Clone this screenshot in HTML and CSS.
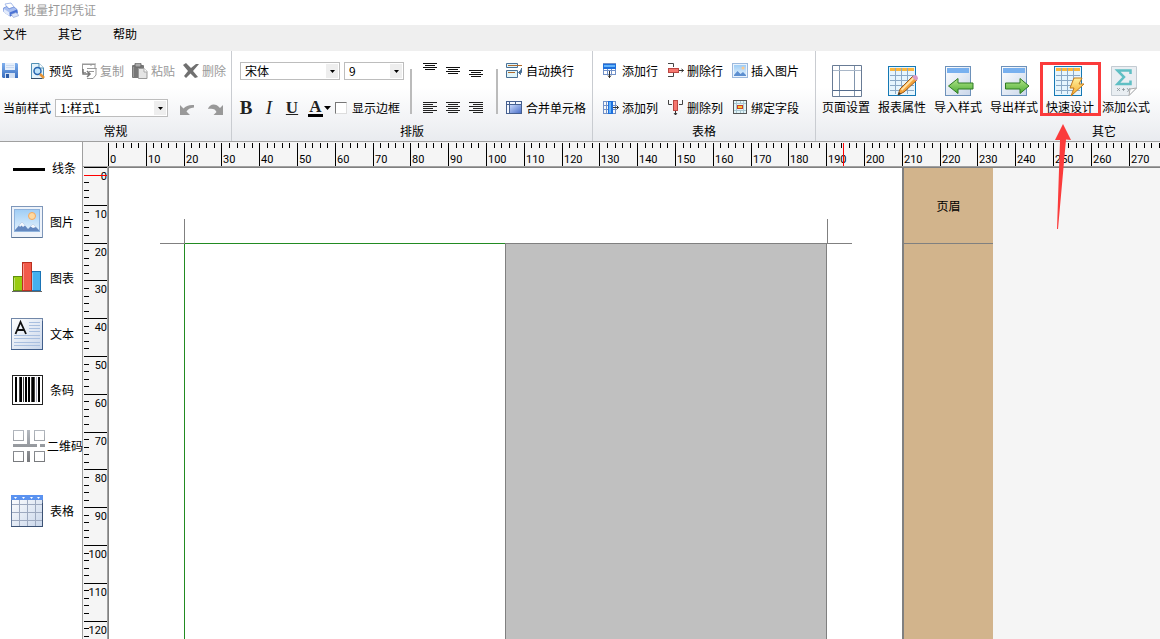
FILE: index.html
```html
<!DOCTYPE html>
<html lang="zh-CN">
<head>
<meta charset="utf-8">
<title>批量打印凭证</title>
<link rel="stylesheet" href="styles.css">
</head>
<body>
<svg class="defs" aria-hidden="true">
  <defs>
    <linearGradient id="sky" x1="0" y1="0" x2="0" y2="1"><stop offset="0" stop-color="#9fcdf5"/><stop offset="1" stop-color="#e4f2fd"/></linearGradient>
    <linearGradient id="paper" x1="0" y1="0" x2="1" y2="1"><stop offset="0" stop-color="#fff"/><stop offset="1" stop-color="#c9d6ea"/></linearGradient>
    <linearGradient id="blue" x1="0" y1="0" x2="1" y2="1"><stop offset="0" stop-color="#c7d8fb"/><stop offset="1" stop-color="#4a6fc8"/></linearGradient>
    <linearGradient id="disk" x1="0" y1="0" x2="0" y2="1"><stop offset="0" stop-color="#7fb0ee"/><stop offset="1" stop-color="#3b6fc0"/></linearGradient>
    <linearGradient id="green" x1="0" y1="0" x2="0" y2="1"><stop offset="0" stop-color="#b4e68a"/><stop offset="1" stop-color="#4bab35"/></linearGradient>
    <linearGradient id="bolt" x1="0" y1="0" x2="0" y2="1"><stop offset="0" stop-color="#fff2a0"/><stop offset="1" stop-color="#f5a623"/></linearGradient>
    <linearGradient id="steel" x1="0" y1="0" x2="0" y2="32" gradientUnits="userSpaceOnUse"><stop offset="0" stop-color="#b4b9c0"/><stop offset="1" stop-color="#77797c"/></linearGradient>
    <symbol id="table-blue" viewBox="0 0 28 30">
      <rect x=".5" y=".5" width="27" height="29" fill="#e6f5fd" stroke="#1478b4"/>
      <rect x="2" y="2" width="24" height="3" fill="#fbb63c"/>
      <path d="M2 9.500H26M2 14.500H26M2 19.500H26M2 24.500H26M7.500 2V28M13.500 2V28M19.500 2V28" stroke="#8aa9c6" fill="none"/>
    </symbol>
    <symbol id="picture" viewBox="0 0 32 32">
      <rect x=".5" y=".5" width="31" height="31" fill="#eef3fa" stroke="#7e97ba"/>
      <rect x="3.500" y="3.500" width="25" height="22" fill="url(#sky)" stroke="#8fb3dc"/>
      <circle cx="21" cy="10" r="3.500" fill="#ffd9a0" stroke="#f4a95e"/>
      <path d="M4 24L11 16L17 23L22 18L28 24V25H4Z" fill="#6488bf"/>
      <path d="M8 19.500L11 16L14 19.500L12 21L10.500 19.500L9 21ZM19.500 20.500L22 18L25 21L22 22Z" fill="#f4f8fd"/>
      <path d="M1 31.500H31" stroke="#5c7596"/>
    </symbol>
  </defs>
</svg>

<header class="titlebar">
  <svg class="app-icon" viewBox="0 0 16 16"><path d="M2 2L8 1L11 5L5 7Z" fill="#fff" stroke="#a9bdea"/><path d="M.5 6L4 4.500L6 7L11 5L14 7.500L14.500 11L7 14L1 10Z" fill="#a9bff0" stroke="#7f9ce0"/><path d="M1 7L6.500 10.500V14L1 10.500Z" fill="#e3ebfb"/><path d="M6.500 10.500L14 7.500L14.500 11.500L7 14.500Z" fill="#4a72d4"/><path d="M8 12.500L13 10.500L16 13.500L10.500 15.500Z" fill="#dbe4f8" stroke="#8aa0d4" stroke-width=".6"/></svg>
  <span>批量打印凭证</span>
</header>

<nav class="menubar">
  <button class="menu">文件</button>
  <button class="menu">其它</button>
  <button class="menu">帮助</button>
</nav>

<section class="ribbon">
  <div class="group general">
    <div class="row tools">
      <button class="tool save" aria-label="保存"><svg class="icon" viewBox="0 0 16 16"><path d="M0 0H15L16 1V15H1L0 14Z" fill="url(#disk)"/><rect x="3" y="0" width="10" height="7" fill="#e6effb"/><path d="M4 2.500H12M4 4.500H12" stroke="#c9d9f0"/><rect x="3" y="10" width="10" height="5" fill="#d3e0f3"/><rect x="4" y="11" width="3" height="4" fill="#2c5ca8"/></svg></button>
      <button class="tool"><svg class="icon" viewBox="0 0 16 16"><path d="M1.500 .5H9L13.500 5V15.500H1.500Z" fill="#e4f3fb" stroke="#5291b5"/><path d="M9 .5V5H13.500" fill="#fff" stroke="#5291b5"/><path d="M1 15.500H12" stroke="#334d68"/><circle cx="7.500" cy="8" r="3.500" fill="#bde3fb" stroke="#2765b0" stroke-width="1.500"/><path d="M10 11L14 15" stroke="#e79436" stroke-width="2.500"/></svg>预览</button>
      <button class="tool off" disabled><svg class="icon" viewBox="0 0 16 16" fill="none" stroke="#999"><path d="M10 3V1.500H1M1.500 1V9.500H5M14 5V1.500H9M1 1H15" /><path d="M6 5.500H15.500M15 5V12L12 15.500H6M8 8.500H13"/><path d="M2 6V11H8M6 8L9 11L6 14" stroke="#777" stroke-width="1.500"/></svg>复制</button>
      <button class="tool off" disabled><svg class="icon" viewBox="0 0 16 16"><rect x="0" y="2" width="12" height="13" rx="1" fill="#777"/><rect x="3" y="0" width="6" height="4" rx="1" fill="#aaa" stroke="#666"/><path d="M1.500 4V14" stroke="#999"/><path d="M6.500 5.500H12L15 8.500V15.500H6.500Z" fill="#e4e4e4" stroke="#999"/><path d="M12 5V9H15" fill="#fff" stroke="#aaa"/></svg>粘贴</button>
      <button class="tool off" disabled><svg class="icon" viewBox="0 0 16 16"><path d="M0 2L3 0L8 5L13 1L16 1L10 8L15 14L12 15L7.500 10.500L3 15L1 13L5 8Z" fill="#707070"/></svg>删除</button>
    </div>
    <div class="row style-row">
      <label for="style">当前样式</label>
      <select id="style" class="combo style-select"><option>1:样式1</option></select>
      <button class="tool undo" aria-label="撤销"><svg class="icon" viewBox="0 0 16 16"><path d="M0 5V15H10L6.500 11.500C8 9 10 8 14 7.500V5C9 4.500 6 6 3.500 8.500Z" fill="#999"/></svg></button>
      <button class="tool" aria-label="重做"><svg class="icon" viewBox="0 0 16 16"><path d="M15 5V15H5.500L8.500 12C7.500 9 4.500 8 0 9C1.500 4 7.500 2.500 12 8Z" fill="#999"/></svg></button>
    </div>
    <h2 class="group-title">常规</h2>
  </div>

  <div class="group layout">
    <div class="layout-body">
      <div class="font-panel">
        <div class="row fonts">
          <select class="combo font-select" aria-label="字体"><option>宋体</option></select>
          <select class="combo size-select" aria-label="字号"><option>9</option></select>
        </div>
        <div class="row formats">
          <button class="format bold">B</button>
          <button class="format italic">I</button>
          <button class="format under">U</button>
          <button class="format color"><span class="swatch">A</span><svg class="caret" viewBox="0 0 7 4"><path d="M0 0H7L3.500 4Z"/></svg></button>
          <label class="check"><input type="checkbox" class="box">显示边框</label>
        </div>
      </div>
      <div class="aligns">
        <button class="tool" aria-label="顶端对齐"><svg class="icon" viewBox="0 0 16 16" stroke="#111"><path d="M1 .5H15M3 2.500H13M1 4.500H15M3 6.500H13"/></svg></button>
        <button class="tool" aria-label="垂直居中"><svg class="icon" viewBox="0 0 16 16" stroke="#111"><path d="M1 4.500H15M3 6.500H13M1 8.500H15M3 10.500H13"/></svg></button>
        <button class="tool" aria-label="底端对齐"><svg class="icon" viewBox="0 0 16 16" stroke="#111"><path d="M1 7.500H15M3 9.500H13M1 11.500H15M3 13.500H13"/></svg></button>
        <button class="tool" aria-label="左对齐"><svg class="icon" viewBox="0 0 16 16" stroke="#222"><path d="M1 2.500H15M1 4.500H11M1 6.500H15M1 8.500H11M1 10.500H15M1 12.500H11"/></svg></button>
        <button class="tool" aria-label="居中"><svg class="icon" viewBox="0 0 16 16" stroke="#222"><path d="M1 2.500H15M3 4.500H13M1 6.500H15M3 8.500H13M1 10.500H15M3 12.500H13"/></svg></button>
        <button class="tool" aria-label="右对齐"><svg class="icon" viewBox="0 0 16 16" stroke="#222"><path d="M1 2.500H15M5 4.500H15M1 6.500H15M5 8.500H15M1 10.500H15M5 12.500H15"/></svg></button>
      </div>
      <div class="cells">
        <button class="tool"><svg class="icon" viewBox="0 0 16 16"><path d="M.5 .5H11.500V4.500H.5ZM.5 7.500H11.500V14.500H.5Z" fill="#e0f5fa" stroke="#4a7196"/><path d="M2 2.500H16M2 9.500H9" stroke="#b06a2c"/><path d="M15.500 5V9.500H13M14.500 7.500V11.500L12.500 9.500Z" fill="#4a7196" stroke="#4a7196"/></svg>自动换行</button>
        <button class="tool"><svg class="icon" viewBox="0 0 16 16"><rect x=".5" y="1.500" width="15" height="12" fill="#f4f8ff" stroke="#46608f"/><rect x="4" y="5" width="11" height="8" fill="url(#blue)"/><path d="M1 4.500H15M3.500 2V13M9.500 2V4" stroke="#46608f"/></svg>合并单元格</button>
      </div>
    </div>
    <h2 class="group-title">排版</h2>
  </div>

  <div class="group table-group">
    <div class="table-tools">
      <button class="tool"><svg class="icon" viewBox="0 0 16 16"><path d="M.5 0V12M4.500 0V12M8.500 0V12M12.500 0V12M0 .5H13M0 7.500H13M0 11.500H13" stroke="#7191c8" fill="none"/><rect x="0" y="1" width="13" height="5" fill="#1e6fdc"/><rect x="1" y="2" width="11" height="2" fill="#64b4fa"/><path d="M6.500 8V15M5 12.500L6.500 14.500L8 12.500" stroke="#333" fill="none"/></svg>添加行</button>
      <button class="tool"><svg class="icon" viewBox="0 0 16 16"><path d="M0 .5H5.500V4M0 13.500H5.500V10" stroke="#444" fill="none"/><rect x=".5" y="5.500" width="10" height="4" fill="#f6776f" stroke="#ba4843"/><path d="M11 7.500H15.500M13.500 6L15.500 7.500L13.500 9" stroke="#333" fill="none"/></svg>删除行</button>
      <button class="tool"><svg class="icon" viewBox="0 0 16 16"><rect x=".5" y=".5" width="15" height="14" fill="#eaf3fd" stroke="#9cb8dc"/><rect x="2" y="2" width="12" height="11" fill="url(#sky)"/><circle cx="11" cy="5" r="1.500" fill="#ffc98c"/><path d="M2 12L5.500 8L8.500 11L11 9L14 12V13H2Z" fill="#5d8fd0"/></svg>插入图片</button>
      <button class="tool"><svg class="icon" viewBox="0 0 16 16"><path d="M.5 1V14M3.500 1V14M9.500 1V14M12.500 1V14M0 1.500H13M0 5.500H13M0 9.500H13M0 13.500H13" stroke="#7191c8" fill="none"/><rect x="5" y="1" width="5" height="13" fill="#1e6fdc"/><rect x="6" y="2" width="2" height="11" fill="#64b4fa"/><path d="M10 7.500H15.500M13.500 5.500L15.500 7.500L13.500 9.500" stroke="#333" fill="none"/></svg>添加列</button>
      <button class="tool"><svg class="icon" viewBox="0 0 16 16"><path d="M.5 0V4.500H4M14.500 0V4.500H11" stroke="#444" fill="none"/><rect x="5.500" y=".5" width="4" height="10" fill="#f6776f" stroke="#ba4843"/><path d="M7.500 11V15M6 13L7.500 15L9 13" stroke="#333" fill="none"/></svg>删除列</button>
      <button class="tool"><svg class="icon" viewBox="0 0 16 16"><rect x="1.500" y=".5" width="13" height="13" fill="#e1f4f8" stroke="#555"/><path d="M2 3.500H14M2 10.500H14M4.500 1V13M8.500 1V4M8.500 10V13M11.500 1V13" stroke="#a9c6d0"/><rect x="5.500" y="5.500" width="5" height="3" fill="#ffc32b" stroke="#c5402c"/></svg>绑定字段</button>
    </div>
    <h2 class="group-title">表格</h2>
  </div>

  <div class="group other">
    <div class="big-tools">
      <button class="big"><svg class="big-icon" viewBox="0 0 32 34"><path d="M2.500 1.500H31.500V32.500H2.500Z" fill="#fff" stroke="#687b95"/><path d="M9.500 2V32M24.500 2V32" stroke="#8195ad"/><path d="M3 6.500H31" stroke="#a9b7c8"/><path d="M3 26.500H31" stroke="#536b8c"/></svg>页面设置</button>
      <button class="big"><svg class="big-icon" viewBox="0 0 32 34"><use href="#table-blue" x="2" y="2" width="28" height="30"/><path d="M12 31L14 25L27 12L31 16L18 28Z" fill="#f5a33b" stroke="#9d5b18"/><path d="M15.500 26L27.500 14" stroke="#ffe1a2" stroke-width="2"/><path d="M26 13L28.500 11Q32 11 32 15L30 17Z" fill="#d79bc8"/><path d="M12 31L13 28L15 30Z" fill="#333"/></svg>报表属性</button>
      <button class="big"><svg class="big-icon" viewBox="0 0 32 34"><rect x="3.500" y="2.500" width="25" height="29" fill="url(#paper)" stroke="#6d91ba"/><rect x="5" y="4" width="22" height="5" fill="#78b0ef"/><path d="M6.500 22L16 14.500V19H31V25H16V29.500Z" fill="url(#green)" stroke="#2f7a25"/></svg>导入样式</button>
      <button class="big"><svg class="big-icon" viewBox="0 0 32 34"><rect x="3.500" y="2.500" width="25" height="29" fill="url(#paper)" stroke="#6d91ba"/><rect x="5" y="4" width="22" height="5" fill="#78b0ef"/><path d="M31 22L22 14.500V19H7.500V25H22V29.500Z" fill="url(#green)" stroke="#2f7a25"/></svg>导出样式</button>
      <div class="marked">
        <button class="big"><svg class="big-icon" viewBox="0 0 32 34"><use href="#table-blue" x="0" y="2" width="28" height="30"/><path d="M20 14H28L25 20H30L17 32L20 24H16Z" fill="url(#bolt)" stroke="#c47a1a"/></svg>快速设计</button>
        <span class="mark-box"></span>
        <svg class="mark-arrow" viewBox="0 0 18 106"><path d="M8 0L16 16L11 15.500L3 105H2L5 16H0Z" fill="#fb3b3b"/></svg>
      </div>
      <button class="big"><svg class="big-icon" viewBox="0 0 32 34"><path d="M1.500 2.500H26.500V24L19 31.500H1.500Z" fill="#e9eef2" stroke="#c3cbd2"/><path d="M26.500 24L19 31.500L20 25Z" fill="#fff" stroke="#aaa"/><path d="M20.500 10V6.500H7.500L14 13L7.500 20H20.500V16.500" fill="none" stroke="#5fbfc4" stroke-width="2.500"/><path d="M7 24L10 27M10 24L7 27M12 25.500H15M13.500 24V27M17 24L18.500 26M20 24L17.500 28" stroke="#8a9499" stroke-width=".8"/></svg>添加公式</button>
    </div>
    <h2 class="group-title">其它</h2>
  </div>
</section>

<main class="workspace">
  <aside class="toolbox">
    <button class="item line-item"><svg class="item-icon" viewBox="0 0 32 32"><path d="M2 17.500H34" stroke="#000" stroke-width="3"/></svg>线条</button>
    <button class="item"><svg class="item-icon" viewBox="0 0 32 32"><use href="#picture"/></svg>图片</button>
    <button class="item"><svg class="item-icon" viewBox="0 0 32 32"><rect x="2.500" y="14.500" width="9" height="14" fill="#99cc10" stroke="#5f8f10"/><rect x="20.500" y="9.500" width="9" height="19" fill="#45b0ee" stroke="#1a73b5"/><rect x="11.500" y=".5" width="9" height="28" fill="#f25a4a" stroke="#b92f20"/><path d="M12.500 2V28M3.500 16V28M21.500 11V28" stroke="#fff" stroke-opacity=".4"/><path d="M1 29.500H31" stroke="#666"/></svg>图表</button>
    <button class="item"><svg class="item-icon" viewBox="0 0 32 32"><rect x=".5" y=".5" width="31" height="31" fill="url(#paper)" stroke="#7187a8"/><path d="M0 31.500H32M31.500 3V32" stroke="#415f8c"/><path d="M18 4.500H29M18 7.500H29M18 10.500H29M18 13.500H29M3 17.500H29M3 20.500H29M3 24.500H29M3 27.500H29" stroke="#a9bfdf"/><path d="M4.500 16L9.500 4L15 16M6.500 12H13" fill="none" stroke="#111" stroke-width="1.800"/></svg>文本</button>
    <button class="item"><svg class="item-icon" viewBox="0 0 32 32"><rect x="1.500" y="1.500" width="30" height="29" fill="#fff" stroke="#222"/><path d="M5 3V28M10 3V28M15 3V28M18 3V28M22 3V28M28 3V28" stroke="#000" stroke-width="2"/><path d="M8.500 3V28M12.500 3V28M20.500 3V28M23.500 3V28" stroke="#444"/><path d="M25.500 3V28" stroke="#aab"/></svg>条码</button>
    <button class="item wide-item"><svg class="item-icon" viewBox="0 0 32 32"><g fill="none" stroke="url(#steel)"><rect x="2.500" y=".5" width="10" height="10"/><rect x="23.500" y=".5" width="10" height="10"/><rect x="2.500" y="21.500" width="10" height="10"/><rect x="23.500" y="21.500" width="10" height="10"/></g><path d="M16 0H19V14H26V17H2V14H16ZM29 14H34V17H29ZM16 21H19V32H16Z" fill="url(#steel)"/></svg>二维码</button>
    <button class="item last-item"><svg class="item-icon" viewBox="0 0 32 32"><rect x=".5" y=".5" width="31" height="31" fill="url(#paper)" stroke="#62789a"/><rect x="0" y="0" width="32" height="5" fill="#5a92f0"/><path d="M3 2H6L4.500 4ZM11 2H14L12.500 4ZM19 2H22L20.500 4ZM26 2H29L27.500 4Z" fill="#fff"/><path d="M1 9.500H31M1 17.500H31M1 25.500H31M8.500 5V31M16.500 5V31M24.500 5V31" stroke="#9da9bf"/><path d="M0 31.500H32M31.500 8V32" stroke="#3c5274"/></svg>表格</button>
  </aside>
  <svg class="ruler ruler-h" id="ruler-h"></svg>
  <svg class="ruler ruler-v" id="ruler-v"></svg>
  <div class="canvas">
    <div class="paper">
      <div class="cell first-cell"></div>
      <div class="cell filled-cell"></div>
    </div>
    <div class="bands">
      <div class="band">页眉</div>
    </div>
  </div>
</main>
<script src="rulers.js"></script>
</body>
</html>
```

FILE: styles.css
```css
*, *::before, *::after { box-sizing: border-box; }

body {
  margin: 0;
  height: 100vh;
  display: flex;
  flex-direction: column;
  overflow: hidden;
  background: #fff;
  color: #000;
  font: 12px/16px "Noto Sans CJK SC", sans-serif;
}

button, select, input { font: inherit; color: inherit; margin: 0; }
button { background: none; border: 0; padding: 0; white-space: nowrap; }

.defs { position: absolute; width: 0; height: 0; }

.titlebar {
  flex: none;
  height: 25px;
  padding: 0 3px 6px;
  display: flex;
  align-items: center;
  gap: 5px;
  color: #999;
}
.app-icon { width: 16px; height: 16px; }

.menubar {
  flex: none;
  height: 26px;
  padding: 0 3px 8px;
  display: flex;
  align-items: center;
  gap: 31px;
  background: #efefef;
}

.ribbon {
  flex: none;
  display: flex;
  height: 91px;
  background: linear-gradient(#fff 40%, #e9ebef);
  border-bottom: 1px solid #a0a0a0;
}
.group {
  flex: none;
  display: flex;
  flex-direction: column;
  border-right: 1px solid #c9ccd1;
}
.general { width: 232px; }
.layout { width: 361px; }
.table-group { width: 223px; }
.other { flex: 1; min-width: 0; border-right: 0; }

.group-title {
  margin: 0;
  font: inherit;
  line-height: 12px;
  text-align: center;
}
.other .group-title { text-align: left; padding-left: 276px; }

.row { display: flex; align-items: center; height: 40px; }
.row + .row { height: 34px; }

.tool { display: flex; align-items: center; gap: 3px; }
.off { color: #999; }
.icon { width: 16px; height: 16px; flex: none; }

.tools { padding-left: 2px; gap: 8px; }
.save { width: 20px; }

.style-row { padding-left: 3px; gap: 4px; }
.style-row .undo { margin: 0 8px; }

.combo {
  appearance: none;
  height: 18px;
  padding: 0 16px 0 4px;
  border: 1px solid #bdbdbd;
  border-radius: 0;
  line-height: 16px;
  background:
    url("data:image/svg+xml,%3Csvg xmlns='http://www.w3.org/2000/svg' width='5' height='3'%3E%3Cpath d='M0 0H5L2.5 3Z'/%3E%3C/svg%3E") right 4px center no-repeat,
    linear-gradient(#eee, #eee) right 1px center / 12px 14px no-repeat,
    #fff;
}
.style-select { width: 113px; }
.font-select { width: 100px; }
.size-select { width: 60px; }

.layout-body { display: flex; height: 74px; }
.font-panel { width: 178px; padding-left: 7px; }
.fonts { gap: 4px; padding-left: 1px; }
.formats { gap: 9px; }

.format {
  min-width: 14px;
  font: 19px/20px "Liberation Serif", serif;
  color: #222;
}
.bold { font-weight: bold; }
.italic { font-style: italic; }
.under { font-size: 17px; text-decoration: underline; font-weight: bold; }
.color { display: flex; align-items: center; gap: 1px; }
.swatch {
  width: 15px;
  line-height: 14px;
  font-size: 17px;
  font-weight: bold;
  border-bottom: 3px solid #000;
}
.caret { width: 7px; height: 4px; }

.check { display: flex; align-items: center; gap: 5px; margin-left: -5px; }
.box {
  appearance: none;
  width: 12px;
  height: 12px;
  border: 1px solid #777;
  border-right-color: #ddd;
  border-bottom-color: #ddd;
  background: #fff;
}

.aligns {
  display: grid;
  grid-template-columns: repeat(3, 23px);
  grid-template-rows: 40px 34px;
  width: 88px;
  padding-left: 12px;
  background:
    linear-gradient(#bbb, #bbb) left 0 top 18px / 2px 45px no-repeat,
    linear-gradient(#bbb, #bbb) right 0 top 18px / 2px 45px no-repeat;
}
.cells {
  display: grid;
  grid-template-rows: 40px 34px;
  padding-left: 8px;
}
.cells .tool { gap: 4px; }

.table-tools {
  display: grid;
  grid-template-columns: 65px 64px auto;
  grid-template-rows: 40px 34px;
  padding-left: 10px;
}

.big-tools { display: flex; height: 74px; padding: 13px 0 0 2px; }
.big {
  width: 56px;
  display: flex;
  flex-direction: column;
  align-items: center;
  gap: 1px;
}
.big-icon { width: 32px; height: 34px; }

.marked { position: relative; }
.mark-box {
  position: absolute;
  z-index: 2;
  left: -2px;
  top: -2px;
  width: 61px;
  height: 54px;
  border: 3px solid #fb3b3b;
}
.mark-arrow {
  position: absolute;
  z-index: 2;
  left: 13px;
  top: 60px;
  width: 18px;
  height: 106px;
}

.workspace {
  flex: 1;
  min-height: 0;
  display: grid;
  grid-template-columns: 83px 25px minmax(0, 1fr);
  grid-template-rows: 25px 1fr;
}

.toolbox {
  grid-row: 1 / 3;
  border-right: 1px solid #a0a0a0;
  padding-left: 11px;
}
.item {
  display: flex;
  align-items: center;
  gap: 7px;
  height: 56px;
}
.line-item { height: 52px; gap: 9px; }
.wide-item { gap: 4px; }
.last-item { margin-top: 9px; }
.item-icon { width: 32px; height: 32px; flex: none; overflow: visible; }

.ruler {
  display: block;
  width: 100%;
  height: 100%;
  background: #f5f5f5;
  font: 11px Roboto, sans-serif;
}
.ruler-h { grid-column: 2 / 4; border-bottom: 1px solid #a0a0a0; }
.ruler-v { border-right: 1px solid #a0a0a0; }
.tick { stroke: #000; }
.cursor { stroke: #f00; }

.canvas {
  display: flex;
  min-width: 0;
  overflow: hidden;
  border-top: 1px solid #808080;
  border-left: 1px solid #808080;
  background: #f5f5f5;
}
.paper {
  position: relative;
  flex: none;
  display: flex;
  width: 795px;
  padding: 75px 0 0 75px;
  background: #fff;
  border-right: 2px solid #808080;
}
.paper::before, .paper::after {
  content: "";
  position: absolute;
  top: 51px;
  width: 25px;
  height: 25px;
  border-bottom: 1px solid #808080;
}
.paper::before { left: 51px; border-right: 1px solid #808080; }
.paper::after { left: 718px; border-left: 1px solid #808080; }
.first-cell {
  width: 321px;
  border-left: 1px solid #228b22;
  border-top: 1px solid #228b22;
}
.filled-cell {
  width: 322px;
  background: #c0c0c0;
  border: 1px solid #808080;
  border-bottom: 0;
}

.bands { width: 89px; background: #d2b48c; }
.band {
  height: 76px;
  display: flex;
  align-items: center;
  justify-content: center;
  border-bottom: 1px solid #808080;
}
```

FILE: rulers.js
```js
const CM = 37.8;
const NS = "http://www.w3.org/2000/svg";

function add(svg, name, attrs, text) {
  const el = document.createElementNS(NS, name);
  for (const key in attrs) el.setAttribute(key, attrs[key]);
  if (text !== undefined) el.textContent = text;
  svg.append(el);
}

function drawRuler(svg, origin, vertical, cursor) {
  const length = vertical ? svg.clientHeight : svg.clientWidth;
  for (let i = 0; origin + i * CM / 5 < length - 1; i++) {
    const p = Math.round(origin + i * CM / 5) + 0.5;
    const major = i % 5 === 0;
    add(svg, "line", vertical
      ? { class: "tick", y1: p, y2: p, x1: 1, x2: major ? 24 : 6 }
      : { class: "tick", x1: p, x2: p, y1: 1, y2: major ? 25 : 6 });
    if (major && (vertical || p + 20 < length)) {
      add(svg, "text", vertical
        ? { x: 24, y: p + 12.5, "text-anchor": "end" }
        : { x: p + 1.5, y: 21 }, i * 2);
    }
  }
  add(svg, "line", vertical
    ? { class: "cursor", y1: cursor, y2: cursor, x1: 1, x2: 24 }
    : { class: "cursor", x1: cursor, x2: cursor, y1: 1, y2: 25 });
}

drawRuler(document.getElementById("ruler-h"), 25, false, 760.5);
drawRuler(document.getElementById("ruler-v"), 0, true, 8.5);
```
